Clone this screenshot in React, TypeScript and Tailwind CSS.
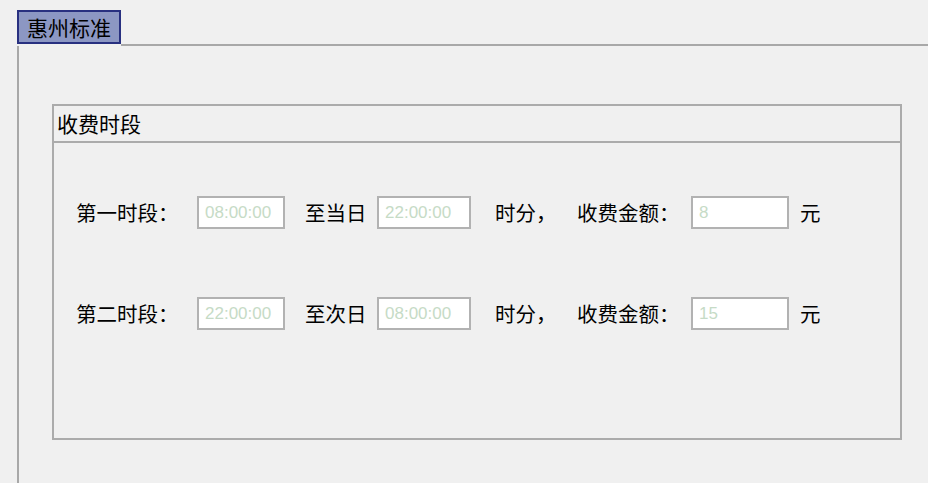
const cjk = "font-['Noto_Sans_CJK_SC','Noto_Sans',sans-serif]";

interface TimeRow {
  label: string;
  start: string;
  toDay: string;
  end: string;
  fee: string;
}

const rows: TimeRow[] = [
  { label: '第一时段：', start: '08:00:00', toDay: '至当日', end: '22:00:00', fee: '8' },
  { label: '第二时段：', start: '22:00:00', toDay: '至次日', end: '08:00:00', fee: '15' },
];

function Field({ value, width }: { value: string; width: string }) {
  return (
    <input
      readOnly
      value={value}
      className={`${width} h-[33px] shrink-0 border-2 border-[#b2b2b2] bg-white pl-[6px] font-['Liberation_Sans',Arial,sans-serif] text-[17px] text-[#c6dbc6] outline-none`}
    />
  );
}

function Row({ row }: { row: TimeRow }) {
  return (
    <div className="flex h-[33px] items-center whitespace-nowrap pl-[22px] text-[20.5px] leading-none text-black">
      <span className="w-[100px] shrink-0">{row.label}</span>
      <div className="ml-[21px]">
        <Field value={row.start} width="w-[88px]" />
      </div>
      <span className="ml-[20px] w-[60px] shrink-0">{row.toDay}</span>
      <div className="ml-[12px]">
        <Field value={row.end} width="w-[94px]" />
      </div>
      <span className="ml-[24px] w-[60px] shrink-0">时分，</span>
      <span className="ml-[22px] w-[100px] shrink-0">收费金额：</span>
      <div className="ml-[14px]">
        <Field value={row.fee} width="w-[98px]" />
      </div>
      <span className="ml-[11px]">元</span>
    </div>
  );
}

export default function App() {
  return (
    <div className={`h-[483px] w-full overflow-hidden bg-[#f0f0f0] pl-[17px] pt-[10px] ${cjk}`}>
      <div className="flex h-[36px]">
        <div className="flex h-[34px] w-[104px] shrink-0 items-center justify-center whitespace-nowrap border-2 border-[#283080] bg-[#8c97c3] text-[21px] leading-none text-black">
          惠州标准
        </div>
        <div className="h-[2px] flex-1 self-end bg-[#a8a8a8]" />
      </div>

      <div className="h-[440px] border-l-2 border-[#a8a8a8] pl-[33px] pt-[58px]">
        <div className="flex h-[336px] w-[850px] flex-col border-2 border-[#ababab]">
          <div className="flex h-[37px] items-center border-b-2 border-[#ababab] pl-[3px] text-[21px] leading-none text-black">
            收费时段
          </div>
          <div className="flex flex-col gap-[68px] pt-[53px]">
            {rows.map((row) => (
              <Row key={row.label} row={row} />
            ))}
          </div>
        </div>
      </div>
    </div>
  );
}
